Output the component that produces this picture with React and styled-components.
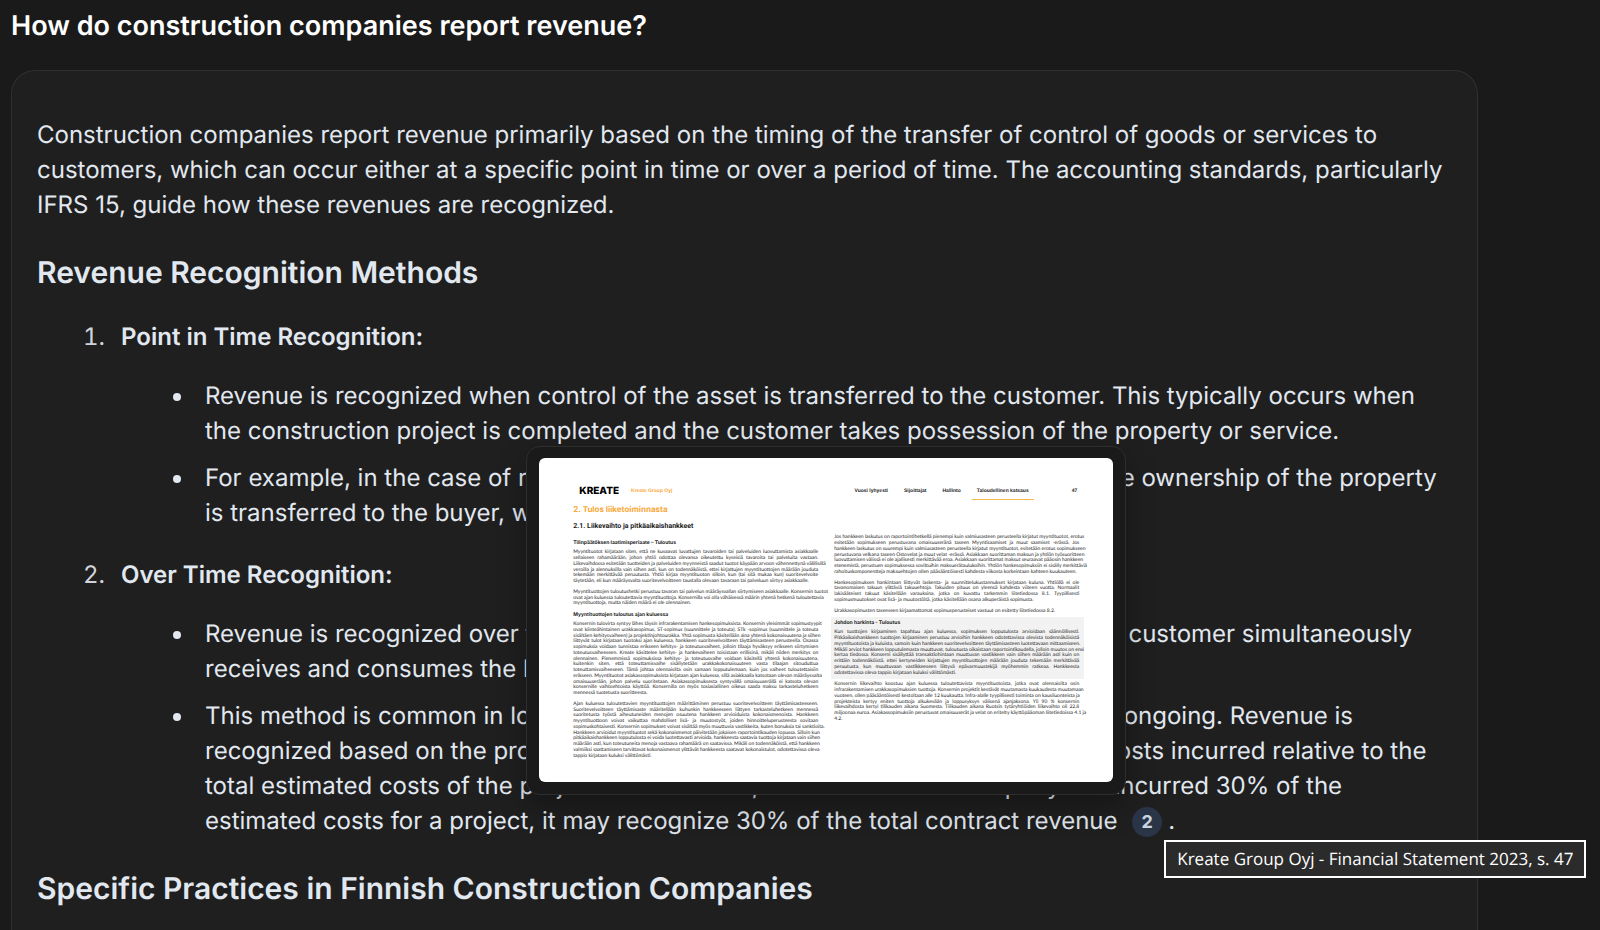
import React from "react";
import styled, { createGlobalStyle } from "styled-components";

const GlobalStyle = createGlobalStyle`
  *, *::before, *::after { box-sizing: border-box; }
  body {
    margin: 0;
    background: #1a1a1a;
    color: #e2e8f0;
    font-family: Inter, "Liberation Sans", sans-serif;
    text-rendering: geometricPrecision;
    overflow-x: hidden;
  }
  h1, h2, h3, h4, p, ol, ul { margin: 0; padding: 0; }
`;

const Page = styled.main`
  display: flex;
  flex-direction: column;
  min-height: 100vh;
  padding: 6px 122px 0 11px;
`;

const Question = styled.h1`
  color: #fff;
  font-size: 27px;
  font-weight: 600;
  line-height: 40px;
`;

const Answer = styled.article`
  flex: 1;
  margin-top: 24px;
  padding: 46px 25px 0;
  background: #1f1f1f;
  border: 1px solid #303030;
  border-bottom: 0;
  border-radius: 24px 24px 0 0;
  font-size: 24px;
  line-height: 35px;
`;

const SectionTitle = styled.h2`
  margin: 31px 0 26px;
  font-size: 30px;
  font-weight: 600;
  line-height: 40px;

  &:last-child { margin-bottom: 0; }
`;

const Methods = styled.ol`
  display: flex;
  flex-direction: column;
  gap: 27px;
  list-style: none;
  counter-reset: method;
`;

const Method = styled.li`
  display: grid;
  grid-template-columns: 68px 1fr;
  column-gap: 16px;
  counter-increment: method;

  &::before {
    content: counter(method) ".";
    color: #d1d5db;
    font-variant-numeric: tabular-nums;
    text-align: right;
  }
`;

const MethodName = styled.h3`
  font-size: 24px;
  font-weight: 600;
  line-height: 35px;
`;

const Points = styled.ul`
  grid-column: 2;
  display: flex;
  flex-direction: column;
  gap: 12px;
  margin-top: 24px;
  padding-left: 52px;
  list-style: none;
`;

const Point = styled.li`
  display: grid;
  grid-template-columns: 8px 1fr;
  column-gap: 24px;

  &::before {
    content: "";
    height: 8px;
    margin-top: 15px;
    border-radius: 50%;
    background: #e2e8f0;
  }
`;

const Citation = styled.span`
  position: relative;
  display: inline-block;
  width: 30px;
  height: 30px;
  margin: 0 6px 0 8px;
  vertical-align: middle;
`;

const CitationButton = styled.button`
  display: block;
  width: 30px;
  height: 30px;
  padding: 0;
  border: 0;
  border-radius: 50%;
  background: #2b3548;
  color: #cbd5e1;
  font: 700 18px/30px Inter, sans-serif;
  text-align: center;
`;

const Tooltip = styled.span`
  position: absolute;
  top: 33px;
  left: 32px;
  z-index: 2;
  padding: 0 11px;
  border: 2px solid #fff;
  background: #2b2b2b;
  color: #fff;
  font: 400 17px/34px "Open Sans", "Noto Sans", sans-serif;
  white-space: nowrap;
`;

const Preview = styled.span`
  position: absolute;
  right: 36px;
  bottom: 42px;
  display: block;
  width: 600px;
  padding: 11px 12px 12px;
  border: 1px solid #2e2e2e;
  border-radius: 14px;
  background: #1a1a1a;
  box-shadow: 0 12px 30px rgba(0, 0, 0, 0.3);
`;

const Sheet = styled.span`
  display: block;
  height: 324px;
  padding: 26px 34px 0;
  border-radius: 6px;
  background: #fff;
  color: #1c1c1c;
  font: 400 5px/1.15 "Liberation Sans", Arial, sans-serif;
`;

const SheetHeader = styled.span`
  display: flex;
  align-items: center;
  height: 15px;
  padding-left: 6px;
  font-weight: 700;
`;

const Logo = styled.span`
  color: #000;
  font: 800 10px/15px Inter, sans-serif;
`;

const Company = styled.span`
  flex: 1;
  padding-left: 12px;
  color: #f8a839;
`;

const SheetNav = styled.span`
  display: flex;
  gap: 16px;
  line-height: 15px;
`;

const SheetTab = styled.span`
  ${(p) =>
    p.$current &&
    "margin: 0 -5px; padding: 0 5px; box-shadow: 0 1px 0 #f8b84e;"}
`;

const SheetNumber = styled.span`
  padding: 0 2px 0 43px;
`;

const Columns = styled.span`
  display: grid;
  grid-template-columns: 245px 245px;
  justify-content: space-between;
`;

const Column = styled.span`
  display: block;
  padding-top: ${(p) => (p.$top ? "36px" : "4px")};
`;

const Chapter = styled.span`
  display: block;
  color: #f8a839;
  font-family: Inter, sans-serif;
  font-size: 8px;
  font-weight: 700;
  line-height: 12px;
`;

const Subchapter = styled.span`
  display: block;
  margin: 6px 0 9px;
  font-family: Roboto, sans-serif;
  font-size: 7px;
  font-weight: 700;
  line-height: 10px;
`;

const Topic = styled.span`
  display: block;
  margin-bottom: 4px;
  font-family: Inter, sans-serif;
  font-weight: 700;
  line-height: 6px;
`;

const Text = styled.span`
  display: block;
  margin-bottom: ${(p) => (p.$tight ? "3px" : "5px")};
`;

const Line = styled.span`
  display: block;
  font-family: Lato, sans-serif;
  white-space: nowrap;
  text-align: justify;
  text-align-last: justify;

  &:last-child { text-align-last: left; }
`;

const Judgement = styled.span`
  display: block;
  margin: 0 -5px 3px -3px;
  padding: 3px 5px 3px 3px;
  background: #f2f2f2;
`;

const lines = (text) => text.trim().split("\n").map((l) => l.trim());

const policy = lines(`Myyntituotot kirjataan siten, että ne kuvaavat luvattujen tavaroiden tai palveluiden luovuttamista asiakkaalle
  sellaiseen rahamäärään, johon yhtiö odottaa olevansa oikeutettu kyseisiä tavaroita tai palveluita vastaan.
  Liikevaihdossa esitetään tuotteiden ja palveluiden myynneistä saadut tuotot käypään arvoon vähennettynä välillisillä
  veroilla ja alennuksilla vain siihen asti, kun on todennäköistä, ettei kirjattujen myyntituottojen määrään jouduta
  tekemään merkittävää peruutusta. Yhtiö kirjaa myyntituoton silloin, kun (tai sitä mukaa kun) suoritevelvoite
  täytetään, eli kun määräysvalta suoritevelvoitteen taustalla olevaan tavaraan tai palveluun siirtyy asiakkaalle.`);

const timing = lines(`Myyntituottojen tuloutushetki perustuu tavaran tai palvelun määräysvallan siirtymiseen asiakkaalle. Konsernin tuotot
  ovat ajan kuluessa tuloutettavia myyntituottoja. Konsernilla voi olla vähäisessä määrin yhtenä hetkenä tuloutettavia
  myyntituottoja, mutta näiden määrä ei ole olennainen.`);

const overTime = lines(`Konsernin tulovirta syntyy lähes täysin infrarakentamisen hankesopimuksista. Konsernin yleisimmät sopimustyypit
  ovat kiinteähintainen urakkasopimus, ST-sopimus (suunnittele ja toteuta), STk -sopimus (suunnittele ja toteuta
  sisältäen kehitysvaiheen) ja projektinjohtourakka. Yhtä sopimusta käsitellään aina yhtenä kokonaisuutena ja siihen
  liittyvät tulot kirjataan tuotoksi ajan kuluessa, hankkeen suoritevelvoitteen täyttämisasteen perusteella. Osassa
  sopimuksia voidaan tunnistaa erikseen kehitys- ja toteutusvaiheet, jolloin tilaaja hyväksyy erikseen siirtymisen
  toteutusvaiheeseen. Kreate käsittelee kehitys- ja hankevaiheen toisistaan erillisinä, mikäli niiden merkitys on
  olennainen. Pienemmissä sopimuksissa kehitys- ja toteutusvaihe voidaan käsitellä yhtenä kokonaisuutena,
  kuitenkin siten, että toteuttamisvaihe sisällytetään urakkakokonaisuuteen vasta tilaajan sitouduttua
  toteuttamisvaiheeseen. Tämä johtaa olennaisilta osin samaan lopputulemaan, kuin jos vaiheet tuloutettaisiin
  erikseen. Myyntituotot asiakassopimuksista kirjataan ajan kuluessa, sillä asiakkaalla katsotaan olevan määräysvalta
  omaisuuserään, johon palvelu suoritetaan. Asiakassopimuksesta syntyvällä omaisuuserällä ei katsota olevan
  konsernille vaihtoehtoista käyttöä. Konsernilla on myös tosiasiallinen oikeus saada maksu tarkasteluhetkeen
  mennessä tuotetusta suoritteesta.`);

const measuring = lines(`Ajan kuluessa tuloutettavien myyntituottojen määrittäminen perustuu suoritevelvoitteen täyttämisasteeseen.
  Suoritevelvoitteen täyttämisaste määritellään kuhunkin hankkeeseen liittyen tarkasteluhetkeen mennessä
  suoritetusta työstä aiheutuneiden menojen osuutena hankkeen arvioiduista kokonaismenoista. Hankkeen
  myyntituottoon voivat vaikuttaa mahdolliset lisä- ja muutostyöt, joiden hinnoitteluperusteesta sovitaan
  sopimuskohtaisesti. Konsernin sopimukset voivat sisältää myös muuttuvia vastikkeita, kuten bonuksia tai sanktioita.
  Hankkeen arvioidut myyntituotot sekä kokonaismenot päivitetään jokaisen raportointikauden lopussa. Silloin kun
  pitkäaikaishankkeen lopputulosta ei voida luotettavasti arvioida, hankkeesta saatavia tuottoja kirjataan vain siihen
  määrään asti, kun toteutuneita menoja vastaava rahamäärä on saatavissa. Mikäli on todennäköistä, että hankkeen
  valmiiksi saattamiseen tarvittavat kokonaismenot ylittävät hankkeesta saatavat kokonaistulot, odotettavissa oleva
  tappio kirjataan kuluksi välittömästi.`);

const billing = lines(`Jos hankkeen laskutus on raportointihetkellä pienempi kuin valmiusasteen perusteella kirjatut myyntituotot, erotus
  esitetään sopimukseen perustuvana omaisuuseränä taseen Myyntisaamiset ja muut saamiset -erässä. Jos
  hankkeen laskutus on suurempi kuin valmiusasteen perusteella kirjatut myyntituotot, esitetään erotus sopimukseen
  perustuvana velkana taseen Ostovelat ja muut velat -erässä. Asiakkaan suorittaman maksun ja yhtiön työsuoritteen
  luovuttamisen välissä ei ole ajallisesti merkittävää eroa. Asiakkaan suorittamat maksut seuraavat pääosin hankkeen
  etenemistä, perustuen sopimuksessa sovittuihin maksuerätaulukoihin. Yhtiön hankesopimuksiin ei sisälly merkittäviä
  rahoituskomponentteja maksuehtojen ollen pääsääntöisesti kahdesta viikosta korkeintaan kahteen kuukauteen.`);

const costs = lines(`Hankesopimuksen hankintaan liittyvät laskenta- ja suunnittelukustannukset kirjataan kuluna. Yhtiöllä ei ole
  tavanomaisen takuun ylittäviä takuuehtoja. Takuiden pituus on yleensä kahdesta viiteen vuotta. Normaalit
  lakisääteiset takuut käsitellään varauksina, jotka on kuvattu tarkemmin liitetiedossa 8.1. Tyypillisesti
  sopimusmuutokset ovat lisä- ja muutostöitä, jotka käsitellään osana alkuperäistä sopimusta.`);

const liabilities = lines(
  `Urakkasopimusten taseeseen kirjaamattomat sopimusperusteiset vastuut on esitetty liitetiedossa 8.2.`
);

const judgement = lines(`Kun tuottojen kirjaaminen tapahtuu ajan kuluessa, sopimuksen lopputulosta arvioidaan säännöllisesti.
  Pitkäaikaishankkeen tuottojen kirjaaminen perustuu arvioihin hankkeen odotettavissa olevista todennäköisistä
  myyntituotoista ja kuluista, samoin kuin hankkeen suoritevelvoitteen täyttämisasteen luotettavaan mittaamiseen.
  Mikäli arviot hankkeen lopputulemasta muuttuvat, tuloutusta oikaistaan raportointikaudella, jolloin muutos on ensi
  kertaa tiedossa. Konserni sisällyttää transaktiohintaan muuttuvan vastikkeen vain siihen määrään asti kuin on
  erittäin todennäköistä, ettei kertyneiden kirjattujen myyntituottojen määrään jouduta tekemään merkittävää
  peruutusta, kun muuttuvaan vastikkeeseen liittyvä epävarmuustekijä myöhemmin ratkeaa. Hankkeesta
  odotettavissa oleva tappio kirjataan kuluksi välittömästi.`);

const revenue = lines(`Konsernin liikevaihto koostuu ajan kuluessa tuloutettavista myyntituotoista, jotka ovat olennaisilta osin
  infrarakentamisen urakkasopimuksien tuottoja. Konsernin projektit kestävät muutamasta kuukaudesta muutamaan
  vuoteen, ollen pääsääntöisesti kestoltaan alle 12 kuukautta. Infra-alalle tyypillisesti toiminta on kausiluonteista ja
  projekteista kertyy eniten tuottoja alkukevään ja loppusyksyn välisenä ajanjaksona. Yli 90 % konsernin
  liikevaihdosta kertyi tilikauden aikana Suomesta. Tilikauden aikana Ruotsin tytäryhtiöiden liikevaihto oli 22,8
  miljoonaa euroa. Asiakassopimuksiin perustuvat omaisuuserät ja velat on eritelty käyttöpääoman liitetiedoissa 4.1 ja
  4.2.`);

function Paragraph({ text, tight }) {
  return (
    <Text $tight={tight}>
      {text.map((line) => (
        <Line key={line}>{line}</Line>
      ))}
    </Text>
  );
}

function SourcePreview() {
  return (
    <Preview>
      <Sheet lang="fi">
        <SheetHeader>
          <Logo>KREATE</Logo>
          <Company>Kreate Group Oyj</Company>
          <SheetNav>
            <SheetTab>Vuosi lyhyesti</SheetTab>
            <SheetTab>Sijoittajat</SheetTab>
            <SheetTab>Hallinto</SheetTab>
            <SheetTab $current>Taloudellinen katsaus</SheetTab>
          </SheetNav>
          <SheetNumber>47</SheetNumber>
        </SheetHeader>
        <Columns>
          <Column>
            <Chapter>2. Tulos liiketoiminnasta</Chapter>
            <Subchapter>2.1. Liikevaihto ja pitkäaikaishankkeet</Subchapter>
            <Topic>Tilinpäätöksen laatimisperiaate – Tuloutus</Topic>
            <Paragraph text={policy} />
            <Paragraph text={timing} />
            <Topic>Myyntituottojen tuloutus ajan kuluessa</Topic>
            <Paragraph text={overTime} />
            <Paragraph text={measuring} />
          </Column>
          <Column $top>
            <Paragraph text={billing} />
            <Paragraph text={costs} />
            <Paragraph text={liabilities} tight />
            <Judgement>
              <Topic>Johdon harkinta - Tuloutus</Topic>
              {judgement.map((line) => (
                <Line key={line}>{line}</Line>
              ))}
            </Judgement>
            <Paragraph text={revenue} />
          </Column>
        </Columns>
      </Sheet>
    </Preview>
  );
}

export default function App() {
  return (
    <>
      <GlobalStyle />
      <Page>
        <Question>How do construction companies report revenue?</Question>
        <Answer>
          <p>
            Construction companies report revenue primarily based on the timing of the
            transfer of control of goods or services to customers, which can occur either
            at a specific point in time or over a period of time. The accounting
            standards, particularly IFRS 15, guide how these revenues are recognized.
          </p>
          <SectionTitle>Revenue Recognition Methods</SectionTitle>
          <Methods>
            <Method>
              <MethodName>Point in Time Recognition:</MethodName>
              <Points>
                <Point>
                  <div>
                    Revenue is recognized when control of the asset is transferred to the
                    customer. This typically occurs when the construction project is
                    completed and the customer takes possession of the property or
                    service.
                  </div>
                </Point>
                <Point>
                  <div>
                    For example, in the case of residential areas, revenue is recognized
                    only when the ownership of the property is transferred to the buyer,
                    which is often at completion.
                  </div>
                </Point>
              </Points>
            </Method>
            <Method>
              <MethodName>Over Time Recognition:</MethodName>
              <Points>
                <Point>
                  <div>
                    Revenue is recognized over time when the contracted work is performed
                    and the customer simultaneously receives and consumes the benefits
                    provided by the company.
                  </div>
                </Point>
                <Point>
                  <div>
                    This method is common in long-term projects where construction work is
                    mostly ongoing. Revenue is recognized based on the progress of the
                    project, generally measured by direct costs incurred relative to the
                    total estimated costs of the project. For instance, if a construction
                    company has incurred 30% of the estimated costs for a project, it may
                    recognize 30% of the total contract revenue{" "}
                    <Citation>
                      <CitationButton type="button" aria-describedby="source-2">
                        2
                      </CitationButton>
                      <SourcePreview />
                      <Tooltip id="source-2" role="tooltip">
                        Kreate Group Oyj - Financial Statement 2023, s. 47
                      </Tooltip>
                    </Citation>
                    .
                  </div>
                </Point>
              </Points>
            </Method>
          </Methods>
          <SectionTitle>Specific Practices in Finnish Construction Companies</SectionTitle>
        </Answer>
      </Page>
    </>
  );
}
